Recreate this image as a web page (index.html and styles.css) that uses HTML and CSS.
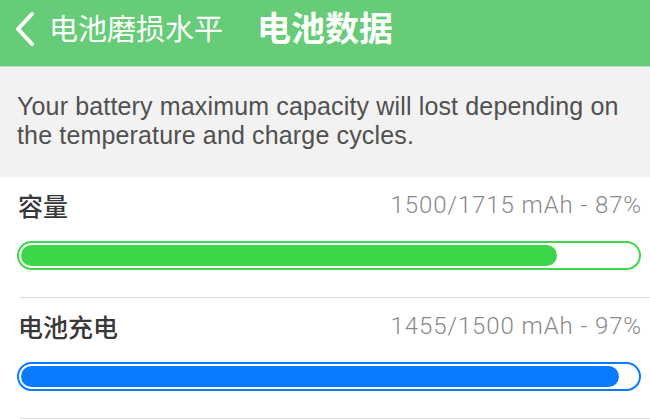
FILE: index.html
```html
<!DOCTYPE html>
<html>
<head>
<meta charset="utf-8">
<link rel="stylesheet" href="styles.css">
</head>
<body>
<div class="header">
  <svg class="back" width="24" height="36" viewBox="0 0 24 36"><path d="M19 3 L5 18 L19 33" fill="none" stroke="#fff" stroke-width="4" stroke-linecap="round" stroke-linejoin="round"/></svg>
  <span class="back-text">电池磨损水平</span>
  <span class="title">电池数据</span>
</div>
<div class="info">Your battery maximum capacity will lost depending on the temperature and charge cycles.</div>
<div class="row">
  <div class="line"><span class="label">容量</span><span class="value">1500/1715 mAh - 87%</span></div>
  <div class="bar green"><div class="fill" style="width:87%"></div></div>
</div>
<div class="sep"></div>
<div class="row">
  <div class="line"><span class="label">电池充电</span><span class="value">1455/1500 mAh - 97%</span></div>
  <div class="bar blue"><div class="fill" style="width:97%"></div></div>
</div>
<div class="sep"></div>
</body>
</html>
```
FILE: styles.css
```css
html, body { margin: 0; padding: 0; background: #fff; }
body { width: 650px; height: 419px; overflow: hidden; font-family: "Liberation Sans", "Noto Sans CJK SC", sans-serif; }
.header { height: 67px; box-sizing: border-box; background: #66cc77; border-bottom: 1px solid #c9d9cc; display: flex; align-items: center; padding: 0 0 12px 13px; }
.back { flex: none; margin-right: 12px; margin-top: 4px; }
.back-text { color: #fff; font-family: "Noto Sans CJK SC", sans-serif; font-size: 29px; line-height: 36px; }
.title { color: #fff; font-family: "Noto Sans CJK SC", sans-serif; font-weight: 700; font-size: 34px; line-height: 36px; margin-left: 34px; }
.info { background: #f2f2f2; height: 110px; box-sizing: border-box; padding: 25px 8px 0 17px; color: #505050; font-family: "Liberation Sans", sans-serif; font-size: 25px; letter-spacing: 0.15px; line-height: 29px; }
.row { padding: 14px 9px 27px 17px; }
.line { display: flex; justify-content: space-between; align-items: center; height: 28px; }
.label { font-family: "Noto Sans CJK SC", sans-serif; font-size: 25px; color: #383838; font-weight: 500; padding-left: 1px; }
.value { font-family: Roboto, "Liberation Sans", sans-serif; font-weight: 300; font-size: 24px; letter-spacing: 0.9px; color: #8a8a8a; margin-right: -1px; }
.bar { margin-top: 22px; height: 29px; box-sizing: border-box; border: 2px solid; border-radius: 15px; padding: 2px; background: #fff; }
.bar .fill { height: 100%; border-radius: 11px; }
.green { border-color: #3fd84c; }
.green .fill { background: #3cd648; }
.blue { border-color: #0a7cff; }
.blue .fill { background: #0a7aff; }
.sep { height: 1px; background: #dcdcdc; margin-left: 20px; }
```
